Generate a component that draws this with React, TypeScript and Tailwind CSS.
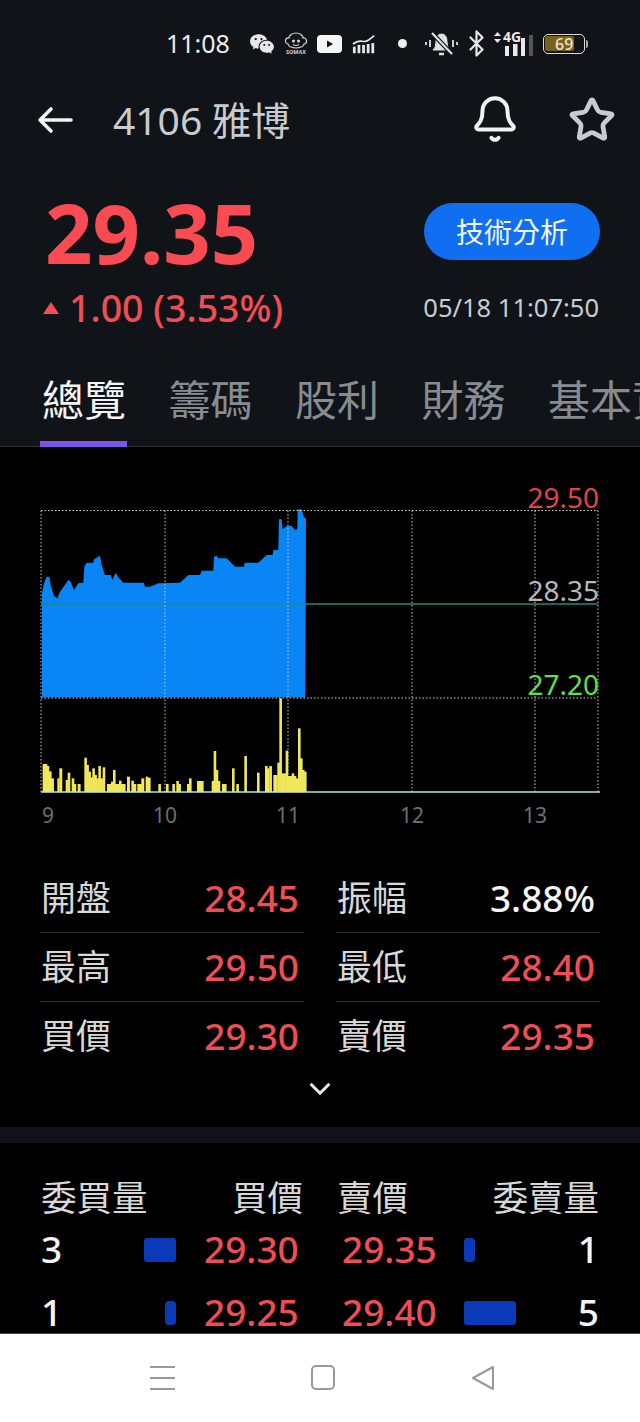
import { Bell, Bluetooth, ChevronDown, Star } from "lucide-react";
import { RiWechatFill } from "react-icons/ri";

const font = "font-['Noto_Sans','Noto_Sans_CJK_TC',sans-serif]";

// traced from the reference, in 3x crop coordinates (origin 30,490)
const area = [
  [36, 622], [36, 310], [42, 280], [50, 260], [58, 260], [62, 285], [72, 318], [82, 325], [90, 305], [115, 270],
  [122, 275], [132, 300], [145, 280], [160, 278], [163, 230], [170, 218], [190, 218], [192, 208], [210, 197],
  [215, 225], [225, 255], [232, 255], [243, 255], [247, 270], [257, 248], [265, 262], [280, 278], [342, 278],
  [345, 290], [360, 290], [385, 280], [450, 278], [475, 255], [510, 255], [515, 242], [550, 242], [552, 200],
  [560, 197], [565, 205], [590, 205], [615, 230], [642, 230], [644, 218], [685, 218], [710, 195], [728, 195],
  [730, 180], [745, 180], [747, 88], [755, 88], [758, 118], [770, 108], [785, 108], [795, 120], [802, 118],
  [803, 58], [815, 58], [822, 82], [828, 85], [826, 622],
];

// x from, x to, top — 3x crop coordinates (origin 30,690)
const bars = [
  [38, 50, 222], [50, 56, 228], [57, 63, 244], [63, 70, 265], [82, 87, 265], [88, 95, 235], [107, 112, 270],
  [113, 119, 248], [125, 131, 265], [131, 137, 282], [143, 150, 282], [163, 169, 203], [169, 175, 225],
  [175, 181, 245], [181, 187, 262], [187, 193, 235], [193, 199, 255], [199, 205, 265], [205, 211, 228],
  [211, 217, 265], [218, 224, 232], [231, 243, 282], [243, 249, 275], [249, 255, 240], [255, 267, 282],
  [267, 273, 272], [273, 285, 282], [291, 298, 260], [304, 310, 272], [310, 317, 282], [322, 334, 282],
  [334, 341, 265], [347, 353, 260], [353, 360, 263], [385, 391, 282], [408, 414, 282], [427, 433, 282],
  [439, 445, 273], [445, 451, 282], [471, 477, 282], [477, 483, 265], [501, 519, 273], [545, 551, 273],
  [551, 557, 183], [557, 563, 240], [563, 569, 273], [576, 588, 282], [606, 612, 235], [619, 625, 282],
  [643, 649, 198], [681, 687, 248], [705, 711, 228], [711, 717, 235], [718, 724, 228], [730, 741, 255],
  [742, 748, 218], [748, 754, 25], [754, 766, 250], [767, 773, 182], [773, 785, 258], [785, 791, 250],
  [791, 797, 258], [798, 804, 265], [804, 810, 115], [810, 816, 205], [816, 822, 240], [822, 828, 245],
];

const stats = [
  ["開盤", "28.45", "振幅", "3.88%"],
  ["最高", "29.50", "最低", "28.40"],
  ["買價", "29.30", "賣價", "29.35"],
];

function StatusIcons() {
  return (
    <div className="flex items-center">
      <RiWechatFill className="ml-[19px] text-[26px] text-[#e8e8e8]" />
      <svg width="24" height="24" viewBox="0 0 24 24" className="ml-[9px]" fill="none" stroke="#d0d0d0" strokeWidth="1.2">
        <path d="M4 12a3 3 0 0 1 1-6 7 5 0 0 1 14 0 3 3 0 0 1 1 6 8 4 0 0 1-16 0z" />
        <circle cx="9.500" cy="9" r="1" fill="#d0d0d0" />
        <circle cx="14.500" cy="9" r="1" fill="#d0d0d0" />
        <path d="M9 12.500q3 2 6 0" />
        <text x="12" y="22" textAnchor="middle" fontSize="5.500" fontWeight="700" fill="#d0d0d0" stroke="none">SOMAX</text>
      </svg>
      <svg width="25" height="18" viewBox="0 0 25 18" className="ml-[9px]">
        <rect width="25" height="18" rx="4" fill="#f5f5f5" />
        <path d="M10 5.500l6 3.500-6 3.500z" fill="#101418" />
      </svg>
      <svg width="24" height="20" viewBox="0 0 26 20" className="ml-[10px]" fill="#e8e8e8">
        <rect x="1" y="13" width="3" height="7" />
        <rect x="6" y="11" width="3" height="9" />
        <rect x="11" y="11" width="3" height="9" />
        <rect x="16" y="10" width="3" height="10" />
        <rect x="21" y="9" width="3" height="11" />
        <path d="M1 10q5-4 10-3t8-2l5-4" fill="none" stroke="#e8e8e8" strokeWidth="1.8" />
      </svg>
      <div className="ml-[22px] h-[9px] w-[9px] rounded-full bg-[#f0f0f0]" />
      <svg width="33" height="28" viewBox="0 0 33 28" className="ml-[18px]" fill="none" stroke="#e0e0e0">
        <path d="M8 20q3-2 3-8 0-8 5.500-8T22 12q0 6 3 8z" fill="#e0e0e0" />
        <path d="M14 24h5" strokeWidth="2.500" />
        <path d="M7 3l20 21" stroke="#101418" strokeWidth="4.500" />
        <path d="M7 3l20 21" strokeWidth="2.200" />
        <path d="M1 12v3M5 10v7M28 10v7M32 12v3" strokeWidth="1.800" />
      </svg>
      <Bluetooth className="ml-[4px] text-[#e8e8e8]" size={29} strokeWidth={1.8} />
      <div className="relative ml-[3px] h-[24px] w-[40px]">
        <span className="absolute left-[9px] top-[-2px] text-[14px] font-bold leading-[14px] text-[#e8e8e8]">4G</span>
        <svg width="40" height="24" viewBox="0 0 40 24" fill="#e8e8e8">
          <path d="M0 4l3.500-4 3.500 4zM0 7l3.500 4 3.500-4z" />
          <rect x="11" y="14" width="4" height="10" />
          <rect x="19" y="12" width="4.500" height="12" />
          <rect x="27" y="6" width="4" height="18" />
          <rect x="35" y="3" width="4" height="21" fill="#555" />
        </svg>
      </div>
      <div className="ml-[9px] flex items-center">
        <div className="flex h-[20px] w-[42px] items-center rounded-[5px] border-[1.5px] border-[#dcdcdc] p-[1.5px]">
          <div className="flex h-full w-[29px] items-center justify-end rounded-[2px] bg-[#7a5f1e] pr-[1px] text-[16px] font-medium text-[#f0e6c8]">69</div>
        </div>
        <div className="ml-[1px] h-[8px] w-[2px] rounded-r bg-[#aaa]" />
      </div>
    </div>
  );
}

function Chart() {
  return (
    <div className="relative h-[312px]">
      <svg width="640" height="312" viewBox="0 490 640 312" className="block">
        <polygon fill="#0a85f5" points={area.map(([x, y]) => `${x / 3 + 30},${y / 3 + 490}`).join(" ")} />
        {[41, 165, 288, 412, 535, 598].map((x) => (
          <line key={x} x1={x} x2={x} y1="510.500" y2="792" stroke="#c8c8c8" strokeWidth="1" strokeDasharray="1.500 2" />
        ))}
        <line x1="41" x2="598" y1="510.500" y2="510.500" stroke="#d0d0d0" strokeDasharray="1.500 2" />
        <line x1="41" x2="598" y1="698" y2="698" stroke="#d0d0d0" strokeDasharray="1.500 2" />
        <line x1="41" x2="598" y1="604" y2="604" stroke="#1f8d80" strokeWidth="1.500" />
        {bars.map(([a, b, t]) => (
          <rect key={a} x={a / 3 + 30} width={(b - a) / 3 + 0.6} y={t / 3 + 690} height={(305 - t) / 3 + 0.5} fill="#f0e85a" />
        ))}
        <line x1="41" x2="600" y1="792" y2="792" stroke="#b5e6e6" strokeWidth="1.500" />
      </svg>
      <span className="absolute right-[41px] top-[-11px] text-[28px] leading-[36px] text-[#e0444c]">29.50</span>
      <span className="absolute right-[41px] top-[82px] text-[28px] leading-[36px] text-[#b8b8b8]">28.35</span>
      <span className="absolute right-[41px] top-[176px] text-[28px] leading-[36px] text-[#5fe04a]">27.20</span>
    </div>
  );
}

function BookRow({ buyQty, buyBar, buy, sell, sellBar, sellQty, height }: { buyQty: string; buyBar: string; buy: string; sell: string; sellBar: string; sellQty: string; height: string }) {
  return (
    <div className={`flex items-center text-[37px] font-medium leading-none ${height}`}>
      <span className="w-[62px] pb-[4px] text-[#f5f5f5]">{buyQty}</span>
      <div className="flex w-[73px] justify-end">
        <div className={`h-[24px] bg-[#0a3ab8] ${buyBar}`} />
      </div>
      <span className="ml-[28px] w-[94px] pb-[4px] text-[#f04d54]">{buy}</span>
      <span className="ml-[44px] w-[94px] pb-[4px] text-[#f04d54]">{sell}</span>
      <div className={`ml-[28px] h-[24px] bg-[#0a3ab8] ${sellBar}`} />
      <span className="ml-auto pb-[4px] text-[#f5f5f5]">{sellQty}</span>
    </div>
  );
}

export default function App() {
  return (
    <div className={`flex h-[1422px] w-[640px] flex-col overflow-hidden bg-black ${font}`}>
      {/* HEADER */}
      <div className="h-[447px] shrink-0 bg-[#101418]">
        <div className="flex h-[86px] items-center pl-[166px] pt-[1px]">
          <span className="text-[25px] leading-none text-[#ececec]">11:08</span>
          <StatusIcons />
        </div>
        <div className="flex h-[68px] items-center pl-[37px]">
          <svg width="36" height="28" viewBox="0 0 36 28" fill="none" stroke="#f2f2f2" strokeWidth="3.600" strokeLinecap="round" strokeLinejoin="round">
            <path d="M3 14h31M14 3 3 14l11 11" />
          </svg>
          <span className="ml-[40px] pb-[2px] text-[39px] leading-none text-[#c8ccd0]">4106 雅博</span>
          <Bell className="mb-[2px] ml-auto text-[#f2f2f2]" size={50} strokeWidth={1.9} />
          <Star className="ml-[48px] mr-[24px] text-[#c8ccd0]" size={48} strokeWidth={2.4} />
        </div>
        <div className="mt-[34px] flex h-[87px] items-center pl-[45px] pr-[40px]">
          <span className="text-[83px] font-bold leading-none text-[#fb4b52]">29.35</span>
          <button className="ml-auto flex h-[57px] w-[176px] items-center justify-center rounded-full bg-[#0f6ff0] text-[28px] text-[#f2f6ff]">
            技術分析
          </button>
        </div>
        <div className="flex h-[66px] items-center pl-[43px] pr-[41px]">
          <div className="h-0 w-0 border-x-[8px] border-b-[12px] border-x-transparent border-b-[#fb4b52]" />
          <span className="ml-[10px] text-[37.5px] font-medium leading-none text-[#f04d54]">1.00 (3.53%)</span>
          <span className="ml-auto text-[25.5px] leading-none text-[#c8ccd0]">05/18 11:07:50</span>
        </div>
        <div className="flex h-[106px] items-start gap-[42.5px] overflow-hidden border-b border-[#2c3034] pl-[42px] pt-[31px]">
          <div className="shrink-0 text-[42px] leading-[56px] text-[#f5f5f5]">總覽</div>
          {["籌碼", "股利", "財務", "基本資料"].map((t) => (
            <div key={t} className="shrink-0 text-[42px] leading-[56px] text-[#868c92]">{t}</div>
          ))}
        </div>
      </div>
      <div className="ml-[40px] mt-[-6px] h-[6px] w-[87px] shrink-0 bg-[#7a55e8]" />

      {/* CHART */}
      <div className="h-[680px] shrink-0 pt-[43px]">
        <Chart />
        <div className="flex h-[26px] text-[21px] leading-[26px] text-[#6e6e6e]">
          <span className="ml-[36px] w-[24px] text-center">9</span>
          <span className="ml-[93px] w-[24px] text-center">10</span>
          <span className="ml-[99px] w-[24px] text-center">11</span>
          <span className="ml-[100px] w-[24px] text-center">12</span>
          <span className="ml-[99px] w-[24px] text-center">13</span>
        </div>
        <div className="mt-[36px] px-[40px]">
          {stats.map(([l1, v1, l2, v2], i) => (
            <div key={l1} className="flex h-[69px] gap-[32px]">
              {[[l1, v1], [l2, v2]].map(([label, value]) => (
                <div key={label} className={`flex w-[264px] items-center justify-between pb-[2px] pl-[1px] pr-[5px] ${i < 2 ? "border-b border-[#2e2e2e]" : ""}`}>
                  <span className="text-[35px] leading-none text-[#d8d8d8]">{label}</span>
                  <span className={`text-[37px] font-medium leading-none ${value === "3.88%" ? "text-[#f5f5f5]" : "text-[#f04d54]"}`}>{value}</span>
                </div>
              ))}
            </div>
          ))}
        </div>
        <div className="flex justify-center pt-[1px]">
          <ChevronDown className="text-[#e8e8e8]" size={34} strokeWidth={2.2} />
        </div>
      </div>

      <div className="h-[16px] shrink-0 bg-[#101418]" />

      {/* ORDER BOOK */}
      <div className="min-h-0 flex-1 overflow-hidden px-[41px] pt-[32px]">
        <div className="flex h-[46px] items-center text-[35.5px] leading-none text-[#d8d8d8]">
          <span className="w-[150px]">委買量</span>
          <span className="w-[112px] text-right">買價</span>
          <span className="ml-[34px] w-[112px]">賣價</span>
          <span className="ml-auto">委賣量</span>
        </div>
        <BookRow height="h-[58px]" buyQty="3" buyBar="w-[32px] rounded-[3px]" buy="29.30" sell="29.35" sellBar="w-[11px] rounded-[4px]" sellQty="1" />
        <BookRow height="h-[68px]" buyQty="1" buyBar="w-[11px] rounded-[4px]" buy="29.25" sell="29.40" sellBar="w-[52px] rounded-[3px]" sellQty="5" />
      </div>

      {/* SYSTEM NAV */}
      <div className="flex h-[89px] shrink-0 items-center border-t border-[#444] bg-white pb-[1px] pl-[150px]">
        <svg width="26" height="26" viewBox="0 0 26 26" stroke="#999" strokeWidth="2">
          <path d="M0 2h25M0 13h25M0 24h25" />
        </svg>
        <div className="ml-[135px] h-[25px] w-[24px] rounded-[5px] border-2 border-[#999]" />
        <svg width="26" height="26" viewBox="0 0 26 26" className="ml-[136px]" fill="none" stroke="#999" strokeWidth="2" strokeLinejoin="round">
          <path d="M2 13L22 2v22z" />
        </svg>
      </div>
    </div>
  );
}
